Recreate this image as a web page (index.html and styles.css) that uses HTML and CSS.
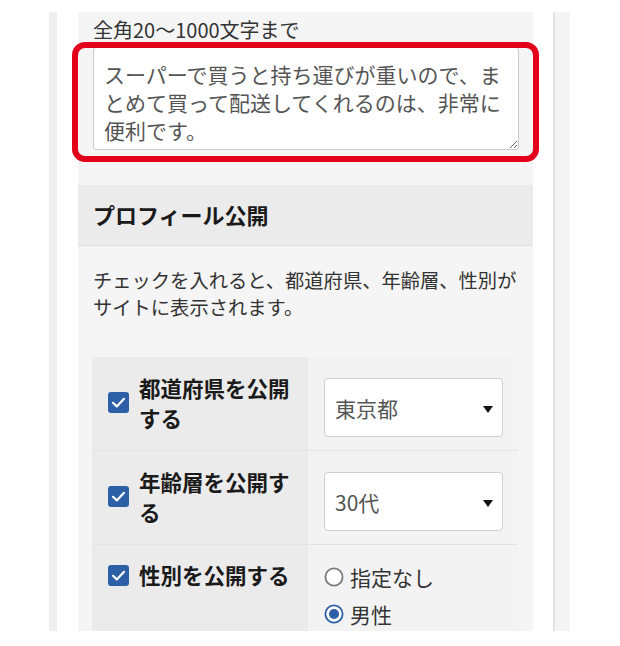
FILE: index.html
```html
<!DOCTYPE html>
<html lang="ja">
<head>
<meta charset="utf-8">
<title>レビュー投稿</title>
<link rel="stylesheet" href="styles.css">
</head>
<body>
<div class="viewport">
  <div class="edge"></div>
  <div class="page">
    <div class="panel">
      <div class="field">
        <div class="field-label">全角20〜1000文字まで</div>
        <div class="textarea-wrap">
          <textarea class="review" rows="3">スーパーで買うと持ち運びが重いので、まとめて買って配送してくれるのは、非常に便利です。</textarea>
          <div class="highlight"></div>
        </div>
      </div>

      <h2 class="section-title">プロフィール公開</h2>
      <p class="section-desc">チェックを入れると、都道府県、年齢層、性別がサイトに表示されます。</p>

      <div class="options">
        <div class="opt-row">
          <label class="opt-label">
            <span class="check"><svg viewBox="0 0 21 21" width="21" height="21"><rect width="21" height="21" rx="3" fill="#2c5fa6"/><path d="M5 10.8 L8.8 14.4 L16 6.8" fill="none" stroke="#fff" stroke-width="2.2" stroke-linecap="round" stroke-linejoin="round"/></svg></span>
            <span class="opt-text">都道府県を公開する</span>
          </label>
          <div class="opt-value">
            <div class="select"><span class="select-text">東京都</span><span class="arrow"></span></div>
          </div>
        </div>
        <div class="opt-row">
          <label class="opt-label">
            <span class="check"><svg viewBox="0 0 21 21" width="21" height="21"><rect width="21" height="21" rx="3" fill="#2c5fa6"/><path d="M5 10.8 L8.8 14.4 L16 6.8" fill="none" stroke="#fff" stroke-width="2.2" stroke-linecap="round" stroke-linejoin="round"/></svg></span>
            <span class="opt-text">年齢層を公開する</span>
          </label>
          <div class="opt-value">
            <div class="select"><span class="select-text">30代</span><span class="arrow"></span></div>
          </div>
        </div>
        <div class="opt-row">
          <label class="opt-label">
            <span class="check"><svg viewBox="0 0 21 21" width="21" height="21"><rect width="21" height="21" rx="3" fill="#2c5fa6"/><path d="M5 10.8 L8.8 14.4 L16 6.8" fill="none" stroke="#fff" stroke-width="2.2" stroke-linecap="round" stroke-linejoin="round"/></svg></span>
            <span class="opt-text">性別を公開する</span>
          </label>
          <div class="opt-value radios">
            <label class="radio"><svg viewBox="0 0 20 20" width="20" height="20"><circle cx="10" cy="10" r="8.6" fill="#fff" stroke="#7a7a7a" stroke-width="1.8"/></svg><span>指定なし</span></label>
            <label class="radio"><svg viewBox="0 0 20 20" width="20" height="20"><circle cx="10" cy="10" r="8.6" fill="#fff" stroke="#2c5fa6" stroke-width="1.8"/><circle cx="10" cy="10" r="5" fill="#2c5fa6"/></svg><span>男性</span></label>
          </div>
        </div>
      </div>
    </div>
  </div>
  <div class="scrollbar"></div>
</div>
</body>
</html>
```
FILE: styles.css
```css
* { box-sizing: border-box; }

html, body {
  margin: 0;
  padding: 0;
  background: #ffffff;
}

body {
  font-family: "Noto Sans CJK JP", "Noto Sans", sans-serif;
  color: #333;
}

.viewport {
  margin: 12px 0 0 49px;
  width: 521px;
  height: 619px;
  overflow: hidden;
  display: flex;
}

.edge {
  width: 8px;
  flex: none;
  background: #efefef;
}

.page {
  width: 496px;
  flex: none;
  background: #ffffff;
  padding: 0 20px 0 21px;
}

.scrollbar {
  width: 17px;
  flex: none;
  background: #f4f4f4;
  border-left: 2px solid #e4e4e4;
}

.panel {
  background: #f5f5f5;
  padding-bottom: 40px;
}

.field {
  padding: 0 14px 0 15px;
}

.field-label {
  padding-top: 6px;
  font-size: 20px;
  line-height: 24px;
  color: #333;
}

.textarea-wrap {
  position: relative;
  margin-top: 5px;
  margin-bottom: 35px;
}

.review {
  display: block;
  width: 426px;
  height: 103px;
  margin: 0;
  padding: 12px 10px 4px 10px;
  border: 1px solid #cccccc;
  border-radius: 3px;
  background: #ffffff;
  font-family: inherit;
  font-size: 21px;
  line-height: 28px;
  color: #555;
  overflow: hidden;
  resize: vertical;
}

.highlight {
  position: absolute;
  left: -21px;
  right: -20px;
  top: -5px;
  bottom: -12px;
  border: 6px solid #e2001a;
  border-radius: 13px;
  pointer-events: none;
}

.section-title {
  margin: 0;
  height: 61px;
  padding: 0 15px;
  background: #ebebeb;
  border-bottom: 1px solid #dedede;
  font-size: 22px;
  font-weight: bold;
  line-height: 59px;
  color: #1a1a1a;
}

.section-desc {
  margin: 0;
  padding: 21px 14px 0 15px;
  font-size: 19.3px;
  line-height: 27px;
  color: #333;
}

.options {
  margin: 36px 15px 0 14px;
}

.opt-row {
  display: grid;
  grid-template-columns: 216px 1fr;
  border-bottom: 1px solid #e3e3e3;
}

.opt-label {
  display: flex;
  align-items: center;
  gap: 10px;
  background: #ebebeb;
  padding: 15px 8px 17px 16px;
}

.check {
  flex: none;
  width: 21px;
  height: 21px;
  display: block;
}

.check svg { display: block; }

.opt-text {
  font-size: 21.5px;
  font-weight: bold;
  line-height: 30px;
  color: #1a1a1a;
}

.opt-row:last-child .opt-label {
  align-items: flex-start;
}

.opt-row:last-child .check {
  margin-top: 5px;
}

.opt-value {
  padding: 21px 15px 13px 16px;
  background: #f3f3f3;
}

.select {
  position: relative;
  width: 179px;
  height: 59px;
  background: #ffffff;
  border: 1px solid #cfcfcf;
  border-radius: 4px;
  display: flex;
  align-items: center;
  padding-left: 10px;
}

.select-text {
  font-size: 21px;
  color: #555;
}

.arrow {
  position: absolute;
  right: 9px;
  top: 27px;
  width: 0;
  height: 0;
  border-left: 5px solid transparent;
  border-right: 5px solid transparent;
  border-top: 7px solid #111;
}

.radios {
  padding: 17px 15px 10px 16px;
  display: flex;
  flex-direction: column;
  gap: 7px;
}

.radio {
  display: flex;
  align-items: center;
  gap: 6px;
  height: 30px;
  font-size: 21px;
  color: #333;
}

.radio svg {
  flex: none;
  display: block;
}
```
